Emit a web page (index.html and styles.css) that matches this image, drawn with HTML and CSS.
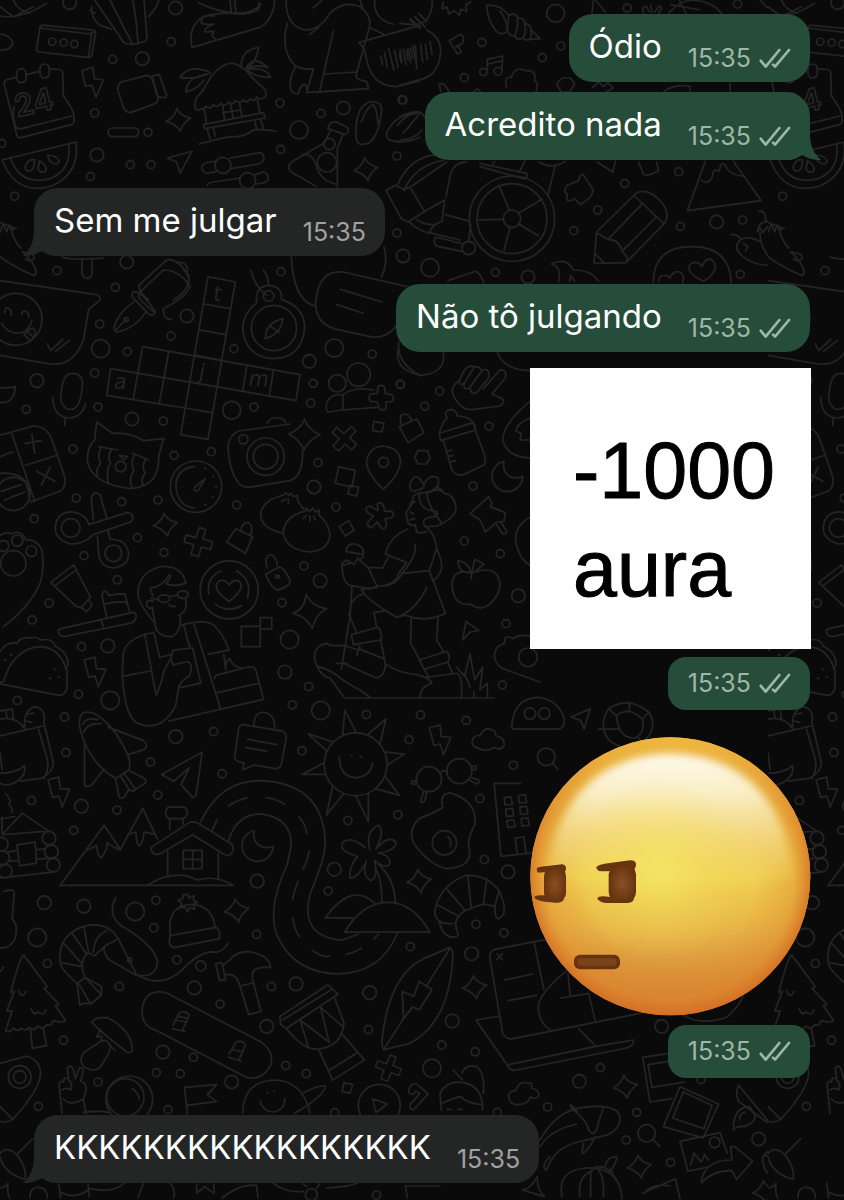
FILE: index.html
```html
<!DOCTYPE html>
<html lang="pt-BR">
<head>
    <title>Conversa</title>
    <meta charset="utf-8" />
    <meta name="viewport" content="width=device-width, initial-scale=1">
    <link rel="stylesheet" href="styles.css">
</head>
<body>
    <svg class="wallpaper" aria-hidden="true">
        <defs>
            <marker id="dot" markerUnits="userSpaceOnUse" markerWidth="40" markerHeight="40" refX="20" refY="20">
                <circle class="line" cx="20" cy="20" r="12" />
            </marker>
            <marker id="ring" markerUnits="userSpaceOnUse" markerWidth="50" markerHeight="50" refX="25" refY="25">
                <circle class="line" cx="25" cy="25" r="20" />
            </marker>
            <path id="spark" d="M-4 -34Q6 -12 36 -6Q12 10 6 34Q-6 12 -36 4Q-12 -8 -4 -34Z" />
            <path id="bolt" d="M-32 -36L0 -44L4 -10L32 -8L10 44L0 12L-18 16Z" />
            <path id="plus" d="M-10 -42H10V-12H40V12H12V42H-12V12H-42V-10H-12Z" />
            <path id="moon" d="M-12 -46A46 46 0 1 0 44 0Q8 12 -8 -14Q-16 -28 -12 -46Z" />

            <pattern id="doodles" width="768" height="1200" patternUnits="userSpaceOnUse">
                <!-- top left -->
                <g class="line" transform="scale(.3333)">
                    <polyline class="dots" points="338,178 514,125 284,339 444,397 391,494 453,494 271,530 44,589 840,309 963,340 842,448 1191,468 1206,299 1191,699 843,815 346,862 171,812 5,430" />
                    <polyline class="rings" points="209,8 527,24 427,176 291,465 1030,324 380,786 1209,768" />
                    <circle cx="897" cy="390" r="27" />
                    <path d="M0 48Q60 60 140 10M0 20L40 50L100 20M40 0Q50 30 90 40M0 102Q30 104 38 128Q36 152 0 150" />
                    <path d="M120 82Q122 74 134 76L280 90Q290 92 286 104L276 164Q272 174 262 172L118 156Q108 154 110 144ZM118 84L270 102Q276 104 274 112L266 168M270 102L286 94" />
                    <circle cx="157" cy="125" r="11" /><circle cx="191" cy="128" r="11" /><circle cx="223" cy="132" r="11" />
                    <path d="M48 232L18 240Q10 244 14 258L50 404Q54 416 66 412L214 374Q226 368 222 354L220 338Q212 318 190 288L188 216Q184 204 150 208M80 224L118 214M42 318Q36 340 46 378Q52 388 64 386L216 348" />
                    <rect x="50" y="206" width="28" height="42" rx="14" /><rect x="120" y="192" width="28" height="42" rx="14" />
                    <text class="outline" x="52" y="352" transform="rotate(-13 52 352)">24</text>
                    <path d="M246 212L278 202L284 236L310 240L288 292L276 256L256 258Z" />
                    <path d="M364 246L440 226Q454 228 458 242L474 294Q476 308 462 312L392 338Q376 338 370 322L354 272Q352 254 364 246ZM458 234Q456 226 466 226L478 224L500 286Q498 296 484 292L474 290Z" />
                    <rect x="324" y="384" width="92" height="26" rx="13" />
                    <use href="#spark" x="535" y="360" />
                    <path d="M502 474L576 454L540 520L530 486ZM6 480L228 426Q240 520 156 558Q50 590 6 480ZM30 472Q60 560 150 536Q216 510 206 432" />
                    <path d="M76 500Q84 474 104 480Q102 516 84 514Q74 510 76 500ZM118 482Q146 500 136 514Q120 522 114 506ZM142 466Q170 464 178 484Q170 500 150 484Z" />
                    <path d="M276 20Q270 50 300 76L334 88M270 30L286 40M284 0L370 126Q388 142 434 124Q444 116 440 100L432 0M330 0L398 134M398 0Q410 60 414 128M446 50Q470 26 476 0" />
                    <path d="M596 8Q640 30 690 38Q750 48 784 12M576 142Q562 80 610 50Q660 34 718 42Q790 40 776 8M576 142L780 82Q820 60 824 0M642 48Q600 42 604 70Q620 76 640 72Q610 84 616 96L642 94Q630 110 646 116M690 0L694 38M704 0L708 38" />
                    <!-- beach hut -->
                    <path d="M588 328Q576 300 606 276L634 228Q670 186 700 190Q726 194 760 236L796 270Q804 290 786 296Q776 300 770 290Q764 308 750 296Q744 312 728 300Q722 314 706 302Q700 318 684 306Q680 322 662 310Q654 326 640 314Q632 330 618 320Q604 334 588 328ZM612 324L620 372M772 300L780 338M668 314L674 362M718 306L726 350M692 312L700 356M668 338L722 330M610 374L790 338L796 354L614 386ZM622 388L630 416M640 384L646 408M764 364L770 386M782 358L790 384M598 432Q640 420 690 410Q730 414 760 390Q800 386 828 394" />
                    <path d="M724 204Q720 150 776 142Q770 190 738 206Q760 160 804 204Q770 190 742 208Q800 200 812 232Q770 234 744 212M632 218Q570 190 540 232Q580 240 624 222Q560 230 558 276Q590 270 612 240" />
                    <path d="M646 484L630 486Q610 488 606 500Q604 516 622 520L650 514M692 474L780 458Q796 464 790 482Q786 490 776 492L692 506M622 556Q624 548 640 546L720 534M764 524L792 516Q808 522 804 540Q798 550 766 552" />
                    <circle cx="669" cy="496" r="24" /><circle cx="743" cy="542" r="24" />
                    <!-- coat and trousers -->
                    <path d="M858 0Q858 80 916 90Q960 90 990 40Q1030 0 1080 20Q1120 50 1106 90L1070 220Q1060 240 1100 244L1106 266L920 278L940 208M862 70Q840 150 884 196Q910 212 940 206M928 104L956 82M1000 94L960 270M974 222L1070 216M886 200Q866 240 872 264Q876 284 896 280Q900 252 918 254L922 276M940 24L966 0M1080 0L1090 30" />
                    <!-- voice note -->
                    <path d="M1124 0Q1120 60 1180 72M1230 60L1260 84M1076 128L1260 76M1076 128Q1092 140 1096 160Q1110 260 1190 260L1260 242M1112 84L1150 102M1142 168L1148 194M1154 158L1162 202M1166 146L1182 210M1184 152L1194 202M1198 162L1204 188M1210 148L1218 194M1224 146L1232 188M1238 138L1246 180" />
                    <path d="M1010 366L1042 382Q1052 394 1036 404L984 386Q988 362 1010 366ZM990 394L974 428L878 484Q856 500 874 516L950 560M1012 560V444L1028 406M908 464Q940 460 950 500Q960 540 1006 552" />
                    <circle cx="988" cy="432" r="17" /><circle cx="981" cy="487" r="29" />
                    <path d="M1068 410Q1064 320 1110 306Q1150 300 1144 340Q1136 410 1104 430Q1070 442 1068 410ZM1084 366Q1100 320 1120 314Q1132 330 1134 370M1162 394Q1190 340 1260 336M1162 394Q1152 420 1186 424Q1220 430 1260 412M1192 376Q1220 340 1250 340" />
                    <use href="#spark" x="1098" y="508" />
                    <!-- lolly, wallet -->
                    <path d="M246 776V820Q252 836 264 834Q278 832 276 816V776M186 770Q200 782 310 774M500 780L416 856Q420 880 446 900M500 780Q530 772 566 826Q572 870 520 900M536 786Q570 790 560 820" />
                    <path d="M0 668Q30 680 48 686M0 696L10 672L20 696L28 674L40 690M32 686Q40 720 62 744M0 770Q40 800 100 826Q114 826 104 800Q86 770 68 756Q106 760 102 776Q92 788 76 778" />
                    <path d="M874 770Q880 900 944 918M1152 740Q1166 790 1144 832" />
                </g>

                <!-- beside the first outgoing bubbles -->
                <g class="line" transform="translate(400 0) scale(.3333)">
                    <polyline class="dots" points="246,127 193,233 427,173 482,138 682,24 1013,12 674,550 593,630 521,692 841,679 836,515 1028,660 286,817 1021,823 9,300" />
                    <polyline class="rings" points="384,831 950,666" />
                    <circle cx="467" cy="40" r="27" /><circle cx="90" cy="803" r="27" />
                    <path d="M130 6L126 26L142 22L146 42L162 32L178 46L182 28L200 34L198 14L212 6M260 16Q300 12 326 46L322 94Q300 110 286 90Q262 60 260 16ZM300 34Q322 60 322 94M326 46Q350 36 352 54Q376 54 374 70Q394 74 392 88L420 116L388 118Q380 124 370 114Q352 122 344 108Q330 108 322 94M352 54Q356 80 344 108M374 70Q380 94 370 114M392 88Q398 106 388 118" />
                    <path d="M148 122L178 104Q194 104 190 124Q184 136 166 140M148 122L172 162L184 156L172 136M262 210V178L308 168L306 208M264 192L308 182" />
                    <circle cx="250" cy="216" r="11" /><circle cx="294" cy="214" r="12" />
                    <path d="M320 262Q310 230 334 232Q346 196 376 212Q410 210 404 240Q420 252 406 278M470 252L486 234H512L524 252L510 276H484ZM578 262L596 246L610 260L624 248L640 264L612 280M118 252Q134 246 146 274M118 252L122 274M220 276L232 266L242 276M792 274Q820 252 870 258V274M990 250V276" />
                    <path d="M0 70Q60 80 80 60Q100 30 96 0M80 90Q120 110 122 150Q120 220 70 236L0 256M30 56L60 84M44 50L76 82M56 40L80 64M0 150L6 186M20 152L24 180M32 146L36 176M46 136L50 206M62 134L68 186M76 132L82 178M90 124L96 164" />
                    <path d="M580 0L576 40M586 0L616 36M806 40Q840 0 880 0Q940 6 964 40M812 14L900 30M838 0L858 40M1080 0Q1110 40 1140 24Q1200 20 1230 0M730 40Q724 20 740 20L748 36M752 14L756 38M764 36L778 18Q790 20 776 40" />
                    <path d="M0 350Q60 320 74 352M0 420Q40 420 66 390M10 400L60 340" />
                </g>

                <!-- wheelchair, pencil, peaks -->
                <g class="line" transform="translate(380 150) scale(.3333)">
                    <circle cx="396" cy="206" r="128" /><circle cx="396" cy="206" r="105" /><circle cx="396" cy="206" r="26" />
                    <path d="M388 180L358 110M418 188L486 148M416 222L476 258M390 232L372 302M370 208L290 210" />
                    <path d="M52 106Q90 20 170 14M72 122Q100 50 190 30M18 122L46 106L70 118L90 112L134 184L84 216L64 206ZM90 112L200 36M194 150L134 184M194 150L186 214Q160 220 148 248L240 270M198 140L212 70Q220 40 260 34M196 194L270 214M88 216Q110 240 150 250M110 208Q130 224 158 224M166 262L180 264L250 282M166 262Q156 282 176 290L246 304M272 224L266 276M300 40L440 70Q446 82 430 86L300 50M344 34L338 44M434 34L420 62M526 46L504 134M476 36Q516 60 556 34" />
                    <circle cx="266" cy="294" r="20" />
                    <path d="M562 106L596 92Q600 72 610 74L640 120Q636 146 600 164L584 146Q564 160 560 146Q566 132 554 126Q558 108 562 106Z" />
                    <path d="M642 340L650 246L770 128Q810 112 850 164Q870 190 854 220L738 338ZM764 138L852 222M788 160L684 268M826 204L726 304M650 248L684 268Q720 270 726 304Q748 320 738 338M648 314L672 338" />
                    <path d="M976 34L922 182L1144 152L1060 34M964 90Q980 106 996 84Q1000 50 1018 64Q1024 20 1044 60Q1060 76 1088 78M652 36L698 66L706 34M776 36L790 72Q800 82 836 62L830 36" />
                    <path d="M820 398Q820 290 936 290Q1050 290 1054 398M970 394Q930 374 926 356Q930 334 950 338Q962 342 966 350Q976 324 994 328Q1010 340 1004 360Q996 380 970 394ZM836 396Q836 374 856 376Q866 378 870 384Q880 360 900 366Q916 376 908 398" />
                    <path d="M1136 184Q1160 180 1156 214M1132 246Q1136 216 1160 214Q1190 220 1196 238L1180 232L1174 246L1162 230L1148 248L1142 234ZM1140 248Q1140 330 1250 376Q1260 370 1250 340Q1210 310 1194 238M1054 254Q1076 252 1082 268Q1060 290 1080 312Q1120 350 1184 346M1082 268Q1110 256 1142 276M1090 280L1104 290L1096 304M1216 318Q1250 316 1254 332L1236 340" />
                    <path d="M514 342Q560 320 580 360Q620 360 640 376L656 394M514 342Q546 350 536 396M568 396L572 376L584 394M204 392L286 364Q300 368 312 398" />
                </g>

                <!-- crossword area -->
                <g class="line" transform="translate(0 270) scale(.3333)">
                    <polyline class="dots" points="299,162 513,198 382,245 284,309 294,411 79,418 490,453 219,537 522,556 634,545 702,236 762,411 940,340 932,399 1117,252 1201,343 954,578 1008,711 710,705 474,690 365,695 229,684 103,746 412,803 252,857 492,847 912,888" />
                    <polyline class="rings" points="561,138 111,332 396,447 928,274 942,651" />
                    <circle cx="302" cy="236" r="27" /><circle cx="1003" cy="234" r="27" /><circle cx="695" cy="421" r="27" />
                    <path d="M0 32L290 74Q304 78 298 92L266 118L250 210Q220 290 150 282L0 256M14 130Q14 112 24 114Q36 118 34 136M66 134Q66 120 78 124Q88 128 86 142M4 160Q30 200 70 186Q92 174 96 150M72 194L88 180Q104 168 106 186Q106 200 92 212ZM84 186L98 200M142 222L152 242L188 208M166 244L208 212" />
                    <circle cx="48" cy="148" r="78" />
                    <!-- fountain pen -->
                    <path d="M490 0L416 70Q414 80 422 90L460 126M490 0Q540 0 570 50Q560 80 490 116Q490 150 514 148M552 0Q570 20 566 40M398 66Q420 56 466 126Q460 142 444 130L396 80ZM408 92Q350 130 342 176Q346 190 360 184Q410 170 436 128M346 182L376 150" />
                    <circle cx="379" cy="149" r="6" />
                    <!-- crossword grid -->
                    <path d="M624 20L706 36L624 508L542 494ZM612 102L690 116M600 180L676 194M588 256L662 270M570 336L648 350M556 414L634 428M428 230L900 314L888 392L648 350M332 296L648 350M332 296L320 376L556 414M428 230L400 386M506 246L478 400M740 290L728 364M820 302L808 376" />
                    <text class="letter" x="640" y="92">t</text>
                    <text class="letter" x="598" y="328">j</text>
                    <text class="letter" x="342" y="358">a</text>
                    <text class="letter" x="746" y="348">m</text>
                    <!-- compass -->
                    <circle cx="822" cy="174" r="68" />
                    <path d="M770 98Q764 48 806 46Q850 50 844 88Q914 110 914 174Q906 264 820 266Q734 260 728 174Q730 130 770 98ZM752 0Q764 50 800 76M790 0Q806 20 806 46M848 146Q846 190 796 206Q796 160 848 146ZM808 166L838 188" />
                    <circle cx="806" cy="78" r="16" />
                    <path d="M950 80Q960 0 1030 6L1240 54M946 100Q950 170 1020 180L1110 200Q1160 210 1196 160M950 80L946 100M1022 58L1146 96M1010 104L1090 130M1196 216Q1190 280 1260 316" />
                    <!-- people -->
                    <circle cx="1012" cy="340" r="26" /><circle cx="1076" cy="314" r="35" />
                    <path d="M980 400Q990 370 1030 374L1028 420L984 426Q976 420 980 400ZM1030 374Q1060 350 1120 360M1028 420L1130 412M1134 350Q1146 342 1154 352L1156 370L1174 374Q1186 384 1176 394L1158 396L1158 416Q1144 426 1136 412L1132 396L1112 394Q1102 382 1112 372L1132 370Z" />
                    <path d="M182 390Q184 324 206 312Q240 304 248 336Q244 400 226 414Q196 430 182 390ZM158 382Q160 440 206 444Q250 440 256 400M196 444L194 466M0 352Q20 356 46 350Q44 388 20 396L0 398" />
                    <!-- calculator -->
                    <path d="M0 496L100 468Q140 468 156 510L194 620Q200 650 180 664L92 696M36 492L104 694M76 586L172 556M0 560L36 546M76 520L124 512M96 494L104 550M110 604L164 634M150 592L124 646M4 664L64 644M14 690L74 666M0 610Q60 606 80 640L90 690" />
                    <circle cx="40" cy="672" r="50" />
                    <!-- crying cat -->
                    <path d="M290 456L338 490Q390 486 430 512L492 506Q486 520 476 560Q480 650 390 656Q270 640 262 570Q262 530 284 510ZM296 530L352 540M398 550L446 570M302 534Q290 560 302 580Q284 600 294 620M334 540Q320 560 332 580Q316 600 326 642M404 554Q390 580 402 600Q384 630 396 654M436 568Q424 590 436 610Q420 630 430 646M358 556L382 560L372 570Z" />
                    <circle cx="362" cy="590" r="16" />
                    <circle cx="588" cy="650" r="77" />
                    <path d="M584 590Q526 596 528 652Q534 710 586 714M616 626L586 650Q578 660 588 664Q600 660 600 652ZM614 596H618M638 620H642M646 650H650M636 682H640M614 704H618" />
                    <!-- camera -->
                    <circle cx="797" cy="560" r="56" /><circle cx="797" cy="560" r="37" /><circle cx="730" cy="508" r="14" />
                    <path d="M870 462L740 480Q690 480 684 530Q686 600 716 640Q730 656 760 650L870 632Q910 620 908 540M802 460Q810 440 836 444Q854 446 856 458" />
                    <path d="M914 448Q924 480 960 494Q924 510 912 540Q900 510 866 492Q900 480 914 448Z" />
                    <use href="#plus" transform="translate(1034 506) rotate(42) scale(.95)" />
                    <use href="#plus" transform="translate(596 816) rotate(16)" />
                    <use href="#spark" x="496" y="764" />
                    <path d="M1016 590L1066 602L1056 652L1006 640ZM1050 646L1076 652L1070 678L1044 672ZM1122 454L1152 460L1146 486L1118 482ZM1018 770L1046 752L1062 780L1036 798ZM680 816L708 776L758 800L736 850ZM722 784Q726 756 746 758Q762 768 752 794" />
                    <path d="M1150 658Q1100 610 1100 576Q1106 530 1150 528Q1200 534 1202 576Q1196 620 1150 658Z" /><circle cx="1151" cy="577" r="15" />
                    <path d="M1132 702Q1146 692 1152 712L1154 724L1176 724Q1188 736 1172 744L1156 746L1160 768Q1148 784 1140 768L1132 756L1114 774Q1096 764 1106 754L1120 738L1102 728Q1092 710 1110 708L1134 722Z" />
                    <!-- dumplings -->
                    <path d="M850 790Q780 776 782 730Q790 690 850 676L856 668L866 676L872 670L880 680L892 676L894 694L912 718M920 722Q850 740 850 790Q860 840 930 846Q990 840 990 790Q980 750 956 736L958 720L946 726L938 714L930 724L918 714ZM846 694L856 688M866 700L864 686M910 746L920 736M930 754V738M946 750L942 738" />
                    <!-- scissors -->
                    <path d="M266 764L382 728Q402 730 398 748L392 756L280 794M280 750L274 684Q282 660 300 674L320 744M280 794Q250 824 212 822Q164 810 166 770Q172 724 220 726Q256 732 268 764M292 798L296 850Q300 892 340 894Q386 888 386 850Q378 806 330 808L324 782" />
                    <circle cx="212" cy="774" r="28" /><circle cx="340" cy="850" r="25" />
                    <!-- paw heart -->
                    <path d="M0 796Q20 784 34 792Q60 776 78 810Q110 806 126 840Q134 900 120 940Q90 1010 10 1070" />
                    <circle cx="40" cy="880" r="38" /><circle cx="52" cy="812" r="17" /><circle cx="94" cy="844" r="16" /><circle cx="10" cy="828" r="16" />
                </g>

                <!-- hiker and neighbours -->
                <g class="line" transform="translate(300 330) scale(.3333)">
                    <polyline class="dots" points="301,163 419,183 374,229 567,289 519,468 493,633 601,671 618,881 607,1065" />
                    <polyline class="rings" points="655,797" />
                    <path d="M294 60Q284 120 360 136Q440 130 430 66M480 150Q450 170 458 190Q480 244 520 238L600 228Q618 216 606 206L576 192L616 144Q622 116 600 120L550 176M480 150Q494 100 524 110Q540 110 544 120M480 150Q476 170 492 160L524 110M492 160Q490 184 508 174L546 122Q566 110 568 140L530 188Q514 196 510 174M592 66Q610 120 690 122" />
                    <path d="M418 310Q430 270 442 264Q428 244 452 238Q470 240 472 258Q520 260 526 292M418 310L520 278L526 300L422 332ZM430 332L456 420Q470 440 490 434L550 406Q560 396 554 376L526 300M438 364L456 360M444 380L460 376M450 396L466 392" />
                    <path d="M298 290L350 266L372 308L324 338ZM304 284Q294 252 316 252Q330 256 334 272M344 382L354 362H382L390 382L380 402H354Z" />
                    <use href="#moon" x="624" y="440" />
                    <path d="M510 552L566 500L576 520L570 530L616 548L612 574L592 576L556 606L540 570L512 552M590 584L608 612Q624 612 618 600L602 576" />
                    <path d="M690 214Q610 280 608 330Q620 380 690 384M690 264Q650 280 648 304L664 310L660 330H690M690 562Q640 590 648 640Q660 690 690 706" />
                    <path d="M514 730Q456 712 456 770Q464 830 510 822Q540 846 572 820Q602 790 600 760Q590 700 514 730L514 746Q516 700 474 692Q474 726 508 728M516 728L524 688L552 702L522 728" />
                    <path d="M498 874L536 902L510 906L488 930ZM690 920Q660 910 640 926Q610 910 614 940Q580 950 584 984Q590 1010 620 1020L720 1056" />
                    <circle cx="684" cy="982" r="28" />
                    <!-- hair and head -->
                    <path d="M372 472Q320 500 332 456Q350 420 372 466Q384 430 414 444Q424 480 372 488M372 488Q330 490 340 516L318 548L324 580Q340 590 346 584L350 606Q370 612 380 604M360 488Q350 520 384 540L410 544Q420 560 390 562Q360 570 376 590Q420 590 426 580Q470 560 468 530Q460 490 432 490Q420 470 410 474M380 490Q384 530 426 580M432 490Q420 470 384 488M332 546L340 552M330 570L344 566M346 516Q330 510 330 530" />
                    <!-- body -->
                    <path d="M322 598Q270 620 256 672L320 698L296 730Q290 764 230 770L210 776L158 768Q126 766 126 700L140 690M346 642Q350 680 306 730L388 722L410 654Q404 610 380 592M264 684L248 714L204 712L230 766M306 730Q290 764 250 768M410 654Q430 700 424 720Q410 750 398 752L388 722L436 850Q380 880 316 856L290 862Q200 810 184 778L230 772M380 772Q350 840 290 862" />
                    <path d="M138 664Q140 640 166 642Q196 650 190 680L178 690L204 714M138 664L190 674M140 690L162 704L174 684M150 700L130 706M156 770L150 860L124 1018M108 1000H140M150 830Q160 800 190 792M146 850L170 910M254 842L222 848L230 894M334 864L332 940L362 996M414 862L410 930L430 964" />
                    <path d="M154 914L234 892Q250 910 242 930L160 944ZM358 990L440 964Q454 980 444 996L372 1018ZM242 930L256 1000Q256 1040 228 1044L130 1000M180 946L170 976M176 956L250 986M374 1020L386 1042M444 998L458 1030M360 1104Q360 1070 396 1060L380 1042L470 1030Q490 1040 484 1104M258 1004Q300 1030 350 1034Q390 1044 394 1056" />
                    <path d="M176 960L130 946Q90 950 80 940Q40 946 44 990Q60 1040 90 1044L134 1104H582M56 1010Q90 1020 110 1036Q140 1060 180 1080L210 1102M470 1012L494 1040L510 972L524 1050L548 1012L540 1080L562 1060V1104M492 1030Q508 1060 510 1074M522 1084V1102" />
                </g>

                <!-- reader, rocket, sun -->
                <g class="line" transform="translate(0 550) scale(.338)">
                    <polyline class="dots" points="347,88 145,157 95,207 241,286 232,427 51,445 191,494 195,599 445,627 467,725 93,741 632,537 657,662 834,156 913,404 865,458 893,594 1084,487 1244,488 1379,504 1210,561 1420,735 1519,637" />
                    <polyline class="rings" points="319,284 947,91 843,361 520,552 241,758" />
                    <circle cx="326" cy="445" r="27" /><circle cx="857" cy="265" r="27" /><circle cx="949" cy="475" r="27" />
                    <path d="M150 96L218 44L268 140L240 170L224 166ZM162 106L226 58M240 170L256 182L272 164L264 150M172 242Q170 236 184 232L396 184Q408 188 400 206Q396 216 380 218L190 256Q176 256 172 242ZM298 206L306 226M316 200L302 136Q304 116 316 124L322 134Q350 130 370 130Q376 160 384 184M308 160Q340 152 376 154" />
                    <path d="M550 98Q540 50 484 48Q410 60 408 130Q410 160 460 218M550 98Q520 110 490 100Q510 80 502 72Q480 110 444 112L452 136M454 152Q432 144 434 164Q444 180 450 168L462 236Q480 260 510 256Q536 240 534 200L530 194Q556 180 550 146M446 142L470 148M502 138L524 134M500 162Q508 170 518 166" />
                    <ellipse cx="485" cy="144" rx="17" ry="11" /><ellipse cx="541" cy="132" rx="16" ry="11" />
                    <path d="M454 244Q370 260 364 310L362 374Q370 500 410 514Q480 540 520 460L530 400M362 374L444 358M428 248L462 430Q480 390 484 360Q500 330 506 320L512 296L570 290L594 394L530 408Q530 390 560 372Q574 340 556 330L512 340L506 320M536 222Q620 200 640 230Q660 250 678 296L616 308M574 220L652 468M544 224L562 290M456 246L472 318L510 308M500 506L780 442L756 352Q750 344 736 346L640 370L634 380M644 422L766 394M662 308L668 356Q664 330 680 322Q684 340 714 350" />
                    <circle cx="678" cy="118" r="86" /><path d="M678 152Q636 124 640 104Q646 88 658 90Q672 92 678 104Q684 92 698 90Q712 90 714 106Q712 126 678 152ZM618 130Q610 80 654 62M700 62Q748 90 732 142M636 160Q676 188 714 164" />
                    <path d="M786 72L826 50Q840 50 858 90Q860 108 822 118Q806 118 786 72ZM790 52Q780 20 800 14Q820 20 820 46M816 76H826V82H816Z" />
                    <path d="M906 132Q924 168 966 174Q934 190 924 232Q906 196 866 188Q900 176 906 132ZM714 226H770V286H714ZM770 200H804V234H770Z" />
                    <!-- taco -->
                    <path d="M0 300Q20 270 50 276Q60 256 90 260Q110 256 120 266Q156 260 162 284Q200 300 202 340L194 350M0 390L10 390Q40 290 120 286Q180 290 198 360V410Q192 430 176 430L0 396M12 326H18M30 310H36M146 380H150M172 376H176M160 352H164" />
                    <use href="#bolt" x="281" y="361" /><use href="#bolt" x="1302" y="562" /><use href="#bolt" x="174" y="716" />
                    <!-- backpack -->
                    <path d="M0 476L36 470L40 500M16 474L22 500M0 500Q50 490 74 530Q66 480 100 464Q136 464 130 510L132 520L158 630Q156 660 120 676L60 684M0 550L130 520M114 530L140 620Q146 650 130 676M80 486L100 482M76 506L94 510M0 660Q50 660 72 638Q80 670 40 690Q20 700 0 690M0 600L6 650" />
                    <!-- rocket plane -->
                    <path d="M236 500Q240 470 280 484Q340 520 380 610Q390 650 376 654L342 676Q280 640 250 570Q230 520 236 500ZM246 540Q260 510 300 514M244 516Q256 494 290 502M320 524L424 564Q440 576 428 590L376 606M250 576V696Q260 704 272 694L304 654M342 676L352 730Q360 740 370 728L380 708L394 714L404 706L430 690Q436 680 424 674L384 654M356 668L384 712M366 660L400 706" />
                    <path d="M478 664L598 598L580 728L570 732L536 694L560 644L514 684Z" />
                    <path d="M716 516L836 536Q850 544 846 560L832 636Q824 650 810 646L752 636L718 650L722 630Q696 628 694 612L706 530Q708 520 716 516ZM752 520Q750 480 780 480Q816 486 812 532M732 560L818 576M726 584L790 596" />
                    <!-- sun -->
                    <circle cx="1052" cy="634" r="93" />
                    <path d="M1014 546L1020 474L1052 536M1090 544L1142 500L1124 574M1144 598L1196 604L1146 636M1140 670L1182 726L1110 706M1090 720L1090 804L1052 726M1016 722L966 784L984 700M960 664L894 664L958 630M966 594L912 544L986 568M1004 612Q1004 670 1052 674Q1098 670 1102 630M1038 608H1042M1066 612H1070" />
                    <path d="M1414 586Q1390 580 1400 556Q1410 546 1420 550Q1430 526 1450 530Q1470 534 1466 550Q1494 554 1492 578Q1480 596 1462 584Q1440 600 1414 586Z" />
                    <circle cx="1269" cy="678" r="37" /><circle cx="1359" cy="654" r="37" />
                    <path d="M1304 658Q1312 648 1322 656M1232 690Q1216 700 1218 684L1232 684M1254 714L1244 744Q1252 752 1258 738L1262 716M1394 644Q1412 630 1408 650L1396 650M1386 680L1410 692Q1420 690 1416 680L1396 674" />
                    <!-- owl, turtle -->
                    <path d="M1514 520Q1520 440 1590 436Q1650 440 1670 500Q1670 530 1650 530H1524Q1512 530 1514 520M1800 470Q1860 430 1920 480Q1950 530 1900 570Q1840 600 1800 560Q1770 520 1800 470M1824 490Q1860 460 1900 500Q1910 540 1880 556Q1830 560 1824 490M1800 470L1824 490M1770 530L1830 530M1862 450V474M1920 480L1900 500M1900 570L1886 552" />
                    <circle cx="1568" cy="484" r="17" /><circle cx="1610" cy="484" r="17" />
                    <path d="M1690 494L1746 470L1728 530L1718 504Z" /><circle cx="1616" cy="612" r="26" /><path d="M1636 632L1650 648" />
                </g>

                <!-- mountains, road, island -->
                <g class="line" transform="translate(0 780) scale(.338)">
                    <polyline class="dots" points="218,149 346,89 461,356 455,437 523,532 759,457 140,543 188,770 353,611 651,663 803,611 845,845 572,820 1090,738 1029,120 1177,103 971,328 1214,493 1433,235 1408,427 1491,452 1307,784 1406,804" />
                    <polyline class="rings" points="131,363 248,373 761,299 575,615 482,805 876,603 789,729 989,264 1094,629 1395,514 1338,713 1503,272" />
                    <circle cx="400" cy="389" r="27" /><circle cx="110" cy="466" r="27" /><circle cx="1278" cy="853" r="27" />
                    <path d="M178 312L308 134L356 206L422 84L466 174M178 312H690M252 210L286 194Q290 230 300 230Q316 210 318 186L340 200L356 206M376 162L402 154Q404 196 414 194Q424 180 426 154L456 160" />
                    <path d="M446 200L560 126Q574 120 590 130L686 190Q696 210 680 222Q670 226 660 218L570 162L474 218Q450 226 446 200ZM496 212V282M646 218V290M502 146V114H542V130M498 80H546Q556 88 554 100Q550 114 540 114H500Q490 108 490 96Q492 84 498 80ZM542 208H598V262H542ZM570 208V262M542 235H598M436 312Q500 270 560 286L584 296Q640 280 690 312" />
                    <!-- log cabin -->
                    <path d="M6 162L66 98L146 152M0 116L44 108M6 110V160M6 162L130 152M50 192L104 184L108 246L58 254ZM110 206L132 204M112 234L138 232M0 290L160 272M20 214L50 208M24 240L54 238M16 40Q36 60 26 72Q40 84 34 96" />
                    <circle cx="145" cy="172" r="20" /><circle cx="152" cy="212" r="20" /><circle cx="158" cy="252" r="20" /><circle cx="4" cy="190" r="20" /><circle cx="8" cy="230" r="20" /><circle cx="16" cy="270" r="20" />
                    <!-- winding road -->
                    <path d="M594 124Q650 2 770 2Q960 10 962 190Q962 230 920 330Q880 460 1010 474L1060 456M676 180Q700 100 770 100Q860 110 862 190L850 250Q780 400 830 480Q880 570 1000 574Q1130 570 1176 452M628 148L642 118M676 76Q700 60 732 52M788 52Q820 56 842 72M884 108Q904 130 908 160M914 212Q910 240 896 264M882 300Q870 330 866 352M866 408Q870 440 886 464M924 504Q950 524 976 522M1024 516Q1050 510 1070 498M1106 470L1120 456" />
                    <use href="#moon" x="764" y="196" />
                    <!-- palm island -->
                    <path d="M1020 450H1272Q1220 360 1146 362Q1070 364 1020 450ZM962 408H1044M962 408Q1040 300 1108 364M1130 362Q1130 290 1110 262M1170 362Q1166 290 1120 250M1094 206Q1080 150 1120 134Q1140 150 1112 204Q1150 160 1172 184Q1170 210 1118 216Q1160 224 1152 250Q1140 264 1108 238Q1120 290 1096 298Q1070 280 1084 240Q1060 290 1036 290Q1030 260 1058 226Q1000 210 1014 184Q1040 164 1080 200" />
                    <path d="M1332 38Q1300 40 1310 80Q1300 90 1240 114Q1204 150 1226 190Q1270 250 1320 262Q1400 260 1388 200Q1380 180 1406 130Q1410 60 1332 38Z" /><circle cx="1315" cy="186" r="36" />
                    <path d="M1324 168Q1338 176 1332 196M1462 10H1540M1462 10L1482 226L1570 216M1492 52L1512 50L1516 72L1494 74ZM1534 46L1554 44L1558 66L1536 68ZM1496 86L1516 84L1520 106L1498 108ZM1538 80L1558 78L1562 100L1540 102ZM1500 120L1520 118L1524 138L1502 140ZM1542 114L1562 112L1566 134L1544 136ZM1524 172L1550 168L1556 214M1524 172L1530 218" />
                    <use href="#spark" x="1240" y="299" /><use href="#spark" x="700" y="386" /><use href="#spark" x="1404" y="613" />
                    <!-- croissant -->
                    <path d="M1340 424Q1290 430 1286 390Q1300 310 1380 282Q1440 280 1476 326Q1500 380 1488 400Q1470 420 1466 400L1464 374Q1430 364 1420 370L1376 386Q1340 410 1350 440Q1360 460 1350 464Q1310 470 1300 420M1384 284L1394 380M1322 322L1376 386M1294 370L1352 400M1440 290L1430 370M1476 330L1464 374" />
                    <!-- bobble hat -->
                    <path d="M504 460Q490 370 570 368Q630 374 636 436M504 460L640 436Q656 450 648 470L514 496Q494 490 504 460ZM554 338L560 350L574 342L572 356L584 362L572 368L576 382L562 378L554 390L548 376L532 378L538 364L526 356L540 352L542 340Z" />
                    <!-- prawn -->
                    <path d="M342 348Q316 400 360 432Q460 490 466 540Q460 590 400 576L320 530Q300 500 312 490L350 470L404 576Q480 620 540 560Q600 500 640 510Q670 500 674 482M350 470Q320 420 260 430Q170 450 178 540Q180 560 228 602L236 666L250 660L270 662L300 636L300 610L252 584Q230 540 260 512L280 520L312 490M190 484L244 546M212 452L256 514M248 434L262 510M316 446Q280 460 276 510M178 540L244 552M228 602L252 584M234 604L268 662M252 584L298 634" />
                    <circle cx="384" cy="532" r="6" /><circle cx="594" cy="550" r="15" />
                    <!-- hammer -->
                    <path d="M638 544L656 540L668 590L650 594ZM658 550L680 532Q700 506 740 508Q800 520 800 556Q780 550 756 560Q740 570 750 600L772 684L736 694L710 610Q700 570 668 576M710 610L750 600" />
                    <!-- pine -->
                    <path d="M70 518Q60 520 32 628L42 626L20 684L36 684L16 742Q30 750 40 734Q52 748 62 734Q76 746 86 732Q100 746 112 728Q126 740 138 724Q150 730 158 712Q180 720 194 712L164 668L174 664L130 616L140 612ZM90 740L96 794L138 786L128 736M54 622Q66 650 76 626M92 676Q100 700 112 686Q130 700 136 680" />
                    <path d="M0 566Q10 560 10 552M12 330Q40 320 42 334L36 410Q56 430 44 470Q30 500 0 496" />
                    <!-- mushroom -->
                    <path d="M272 716Q280 700 320 704Q390 740 392 800Q384 812 372 802Q290 740 272 716ZM296 738L286 760L300 758L300 772L314 770L330 790L340 800M300 772L248 806Q230 830 250 850Q280 866 296 850Q330 800 326 786" />
                    <!-- snowboard -->
                    <path d="M420 690Q420 630 470 626Q490 626 520 644L770 774Q810 800 802 840Q780 890 730 880L460 740Q424 730 420 690ZM512 726L530 690Q550 680 560 696L540 740M510 736L548 744M520 710L552 716M524 698L556 706M678 810L698 776Q718 768 726 784L708 826M676 820L714 832M686 798L720 804" />
                    <!-- drum -->
                    <path d="M828 700L970 606L984 618L1000 634L846 736L830 722ZM836 710L984 618M850 738Q900 800 940 796Q1010 790 1018 720L990 646M888 710L912 790M888 710L974 776L948 672L1014 730M944 800L984 888L1078 828L1014 754M972 860L1058 806" />
                    <!-- surfboard -->
                    <path d="M1330 496Q1340 500 1340 520Q1330 720 1210 780L1136 798Q1130 790 1130 770Q1150 580 1250 530ZM1330 500L1264 606M1136 796L1194 706L1190 626L1224 640L1240 596L1278 620L1240 680L1220 672L1194 706" />
                    <use href="#plus" transform="translate(1150 852) rotate(20) scale(.9)" />
                </g>

                <!-- laptop, photos, fish -->
                <g class="line" transform="translate(440 930) scale(.3333)">
                    <polyline class="dots" points="481,413 323,531 590,547 559,630 692,697 783,449 172,547" />
                    <polyline class="rings" points="418,454 665,289 956,627" />
                    <path d="M330 26L164 58Q146 66 150 86L188 310Q200 330 220 326L600 250M180 258L108 270L208 414Q214 424 230 420L560 354Q586 344 580 330L464 350L206 404M416 296L466 348M282 36L312 180M172 72L186 88M188 70L170 90M194 150L278 132M204 212L290 196M330 300Q290 270 296 220Q310 180 380 122M384 130L390 194M364 204L446 190L466 274" />
                    <path d="M4 540L0 490Q20 450 70 458Q130 470 128 540M40 420L68 450M66 430Q76 400 110 410Q136 430 130 490M6 520Q50 500 62 500Q80 520 124 524M22 538H34M54 538H68" />
                    <path d="M232 524Q200 520 208 490Q216 480 228 482Q236 450 266 460Q280 456 274 474Q300 480 296 500Q280 510 272 500Q264 524 232 524Z" />
                    <use href="#spark" x="556" y="470" /><use href="#spark" x="598" y="710" />
                    <path d="M608 382L740 362M608 382L630 516L696 506M624 404L722 388M624 404L636 472L734 456M720 470L836 522L790 624L670 590ZM730 486L816 526L792 596L698 564Z" />
                    <path d="M430 640L426 670Q440 670 466 620M300 630Q350 540 430 532Q530 520 540 560Q540 610 480 620L400 640Q340 660 320 720Q300 710 330 680M392 524L412 544M392 524Q390 530 400 540Q440 570 446 600Q460 620 470 600Q480 560 490 534M300 650Q330 600 410 582" />
                    <circle cx="620" cy="610" r="26" /><path d="M638 628L660 650" />
                    <path d="M720 634L840 608L862 670M720 634L744 724L800 712M752 706L762 670L784 696L794 674L806 690M784 758Q790 690 876 690L872 650L884 650L938 694L890 748L876 722Q820 720 784 758Z" /><circle cx="824" cy="637" r="16" />
                    <path d="M896 466L990 580L1080 470M896 466Q884 490 896 514L980 576Q990 580 1000 572M1000 440Q1000 476 1024 476Q1054 470 1054 440M930 530Q880 530 880 600Q890 590 896 590Q936 590 946 560ZM900 570Q896 550 916 546M720 250Q780 290 860 262Q900 230 912 190" />
                    <path d="M970 700Q960 680 990 660Q1070 600 1100 600Q1150 600 1210 640M970 700Q980 750 1030 744Q1110 710 1110 680L1144 690M976 676Q1030 690 1040 746" />
                    <path d="M366 800Q350 720 440 714Q540 710 546 806M420 800Q410 740 460 720M452 800V724M490 800Q494 740 476 722M466 712Q490 704 520 730M496 708Q500 680 530 680Q530 700 510 724M246 780Q270 780 292 740Q290 780 314 800Q280 790 246 780M608 790L706 746L720 806M620 780Q650 760 690 768" />
                    <use href="#spark" x="974" y="786" />
                </g>

                <!-- bottom left -->
                <g class="line" transform="translate(0 1060) scale(.3333)">
                    <polyline class="dots" points="469,38 541,41 294,66 115,139 504,149 919,41 1004,158 1130,405" />
                    <polyline class="rings" points="695,66" />
                    <path d="M0 184Q20 190 38 178Q120 90 122 40Q120 0 80 -12L0 10M0 140L38 178" /><circle cx="59" cy="51" r="34" /><circle cx="59" cy="51" r="19" />
                    <path d="M186 160L178 80Q176 60 190 66Q190 50 206 56L202 24Q214 10 220 30L226 56L238 24Q254 20 248 40L242 64Q260 70 258 90L250 120L258 160M190 116Q210 140 250 118M186 90Q200 80 212 90Q220 70 206 60" />
                    <circle cx="388" cy="118" r="70" /><circle cx="376" cy="112" r="56" />
                    <path d="M396 86Q414 96 418 118M250 158Q290 150 330 158M554 82L650 74L622 104L650 124L562 136M554 82L562 162M728 160Q730 60 830 60Q910 66 930 160M910 98Q970 70 976 80Q970 110 884 160M780 124Q790 156 820 156Q856 150 854 116M800 98H804M820 94H824" />
                    <circle cx="1138" cy="136" r="63" />
                    <path d="M1118 116L1162 132L1128 158ZM1032 68L1058 74L1050 100L1026 94ZM1226 98Q1226 70 1250 72L1284 102L1240 150Q1226 146 1230 134L1260 100L1246 94Q1240 110 1226 98" />
                    <path d="M0 280Q20 256 50 284L98 236M0 290Q10 340 76 358M50 284Q80 320 76 358M0 384Q20 380 24 370Q20 400 30 414M90 414Q90 380 116 382Q142 384 142 414M176 370L182 414M264 370L268 410M270 386Q340 400 372 370M182 396Q220 420 266 390M414 414L430 370M510 370Q530 390 520 414M590 372V400L614 380L642 400V372M666 414Q720 370 770 376L774 414M820 370Q860 400 910 394M980 384Q1050 380 1070 370M920 380L910 372M950 386L960 370M1216 378H1320M1216 378L1222 414" />
                    <circle cx="934" cy="404" r="18" />
                </g>
            </pattern>
        </defs>
        <rect width="100%" height="100%" fill="url(#doodles)" />
    </svg>

    <!-- shared shapes for the bubbles -->
    <svg class="sprite" aria-hidden="true">
        <symbol id="tail" viewBox="0 0 34 34">
            <path d="M11 0V8C11 20 7 28 0 34C8 34 14 32 19 29C23 32 28 34 34 34V30L14 0Z" />
        </symbol>
        <symbol id="checks" viewBox="0 0 96 63">
            <path d="M5 38L20 56L61 6M42 50L48 56L90 6" />
        </symbol>
    </svg>

    <main class="chat">
        <div class="message out">
            <span class="text">Ódio</span>
            <span class="meta"><time>15:35</time><svg class="checks"><use href="#checks" /></svg></span>
        </div>
        <div class="message out">
            <svg class="tail"><use href="#tail" /></svg>
            <span class="text">Acredito nada</span>
            <span class="meta"><time>15:35</time><svg class="checks"><use href="#checks" /></svg></span>
        </div>
        <div class="message in turn">
            <svg class="tail"><use href="#tail" /></svg>
            <span class="text">Sem me julgar</span>
            <span class="meta"><time>15:35</time></span>
        </div>
        <div class="message out turn">
            <span class="text">Não tô julgando</span>
            <span class="meta"><time>15:35</time><svg class="checks"><use href="#checks" /></svg></span>
        </div>

        <div class="sticker aura">-1000<br>aura</div>
        <div class="message out stamp">
            <span class="meta"><time>15:35</time><svg class="checks"><use href="#checks" /></svg></span>
        </div>

        <svg class="sticker face" viewBox="0 0 843 837" role="img" aria-label="Emoji desconfiado">
            <defs>
                <linearGradient id="skin" x1="0" y1="0" x2="0" y2="1">
                    <stop offset="0" stop-color="#e6ad35" />
                    <stop offset=".25" stop-color="#efc653" />
                    <stop offset=".5" stop-color="#f0d04e" />
                    <stop offset=".68" stop-color="#e8b648" />
                    <stop offset=".85" stop-color="#da933b" />
                    <stop offset="1" stop-color="#d47a32" />
                </linearGradient>
                <radialGradient id="rim">
                    <stop offset=".6" stop-color="#dd8429" stop-opacity="0" />
                    <stop offset=".88" stop-color="#dd8429" stop-opacity=".4" />
                    <stop offset="1" stop-color="#d56c22" stop-opacity=".85" />
                </radialGradient>
                <linearGradient id="toprim" x1="0" y1="0" x2="0" y2="1">
                    <stop offset="0" stop-color="#edb93f" />
                    <stop offset=".3" stop-color="#e8a938" stop-opacity=".4" />
                    <stop offset=".5" stop-color="#e8a938" stop-opacity="0" />
                </linearGradient>
                <linearGradient id="shine" x1="0" y1="0" x2="0" y2="1">
                    <stop offset="0" stop-color="#fefbee" />
                    <stop offset=".3" stop-color="#faf0c8" stop-opacity=".95" />
                    <stop offset=".65" stop-color="#f5e28e" stop-opacity=".6" />
                    <stop offset="1" stop-color="#f3df6c" stop-opacity="0" />
                </linearGradient>
                <radialGradient id="glow">
                    <stop offset="0" stop-color="#f6e966" stop-opacity=".8" />
                    <stop offset=".5" stop-color="#f5e460" stop-opacity=".35" />
                    <stop offset="1" stop-color="#f5e060" stop-opacity="0" />
                </radialGradient>
                <radialGradient id="iris">
                    <stop offset="0" stop-color="#8a4f22" />
                    <stop offset="1" stop-color="#673410" />
                </radialGradient>
                <filter id="soft"><feGaussianBlur stdDeviation="12" /></filter>
            </defs>
            <ellipse cx="421" cy="418" rx="420" ry="417" fill="url(#skin)" />
            <ellipse cx="421" cy="418" rx="420" ry="417" fill="url(#rim)" />
            <ellipse cx="421" cy="418" rx="420" ry="417" fill="url(#toprim)" />
            <path d="M56 420Q66 240 180 134Q280 50 421 50Q562 50 662 134Q776 240 786 420Q600 470 421 470Q240 470 56 420Z" fill="url(#shine)" filter="url(#soft)" />
            <circle cx="390" cy="400" r="270" fill="url(#glow)" />
            <g fill="#673410">
                <path d="M20 394Q24 388 60 386L96 382Q108 384 108 394Q108 404 100 406L60 402Q30 408 22 406ZM14 478Q30 472 60 478L98 480Q106 484 98 492Q90 500 60 496Q26 494 14 484Z" />
                <path d="M198 392Q204 382 240 378L300 370Q318 370 318 382Q318 396 308 400L270 398Q230 404 206 402ZM202 484Q206 474 240 480L306 478Q314 484 310 490Q306 498 290 498H226Q204 494 202 484Z" />
            </g>
            <rect x="42" y="390" width="66" height="104" rx="26" fill="url(#iris)" />
            <rect x="236" y="382" width="82" height="114" rx="30" fill="url(#iris)" />
            <rect x="132" y="653" width="138" height="44" rx="18" fill="#673410" />
            <rect x="142" y="664" width="118" height="22" rx="10" fill="#7a431b" />
        </svg>
        <div class="message out stamp">
            <span class="meta"><time>15:35</time><svg class="checks"><use href="#checks" /></svg></span>
        </div>

        <div class="message in last">
            <svg class="tail"><use href="#tail" /></svg>
            <span class="text">KKKKKKKKKKKKKKKKK</span>
            <span class="meta"><time>15:35</time></span>
        </div>
    </main>
</body>
</html>
```
FILE: styles.css
```css
html, body {
    margin: 0;
    min-height: 100%;
}

body {
    position: relative;
    background-color: #0a0a0a;
    color: #fff;
    font-family: Inter, Roboto, "Liberation Sans", sans-serif;
    overflow-x: hidden;
}

/* Wallpaper */
.wallpaper {
    position: absolute;
    inset: 0;
    width: 100%;
    height: 100%;
    z-index: -1;
}

.line {
    fill: none;
    stroke: #242424;
    stroke-width: 5;
    stroke-linecap: round;
    stroke-linejoin: round;
}

.dots, .rings {
    stroke: none;
}

.dots {
    marker: url(#dot);
}

.rings {
    marker: url(#ring);
}

.outline {
    font-family: Inter, sans-serif;
    font-size: 92px;
    font-weight: 600;
}

.letter {
    font-family: "DejaVu Sans", sans-serif;
    font-size: 62px;
    font-style: italic;
    fill: #242424;
    stroke: none;
}

.sprite {
    position: absolute;
    width: 0;
    height: 0;
}

/* Chat */
.chat {
    display: flex;
    flex-direction: column;
    gap: 10px;
    padding: 14px 34px 17px;
}

.message {
    position: relative;
    display: flex;
    gap: 26px;
    padding: 11px 19px 9px 20px;
    border-radius: 24px;
}

.message.out {
    align-self: flex-end;
    background-color: #264c3a;
    color: #264c3a;
}

.message.in {
    align-self: flex-start;
    background-color: #242626;
    color: #242626;
}

.message.turn {
    margin-top: 18px;
}

.message.last {
    margin-top: 27px;
}

.message.stamp {
    margin-top: -2px;
    padding: 11px 19px 12px 20px;
    border-radius: 18px;
}

.text {
    height: 48px;
    color: #fff;
    font-size: 33px;
    line-height: 42px;
}

.meta {
    position: relative;
    display: flex;
    align-items: center;
    align-self: flex-end;
    gap: 8px;
    font-size: 25px;
    line-height: 30px;
}

.out .meta {
    color: #9fb6a9;
}

.in .meta {
    color: #a0a1a1;
}

.checks {
    width: 32px;
    height: 21px;
    fill: none;
    stroke: currentColor;
    stroke-width: 8;
    stroke-linecap: round;
    stroke-linejoin: round;
}

.tail {
    position: absolute;
    bottom: 0;
    left: -11px;
    width: 34px;
    height: 34px;
    fill: currentColor;
}

.out .tail {
    left: auto;
    right: -11px;
    transform: scaleX(-1);
}

/* Stickers */
.sticker {
    align-self: flex-end;
    width: 281px;
    height: 281px;
    margin-right: -1px;
}

.aura {
    box-sizing: border-box;
    margin-top: 6px;
    padding: 54px 0 0 43px;
    background-color: #fff;
    color: #000;
    font-family: "Liberation Sans", Arial, sans-serif;
    font-size: 79px;
    line-height: 98px;
    -webkit-text-stroke: 1px #000;
}

.face {
    margin-top: 16px;
}
```
